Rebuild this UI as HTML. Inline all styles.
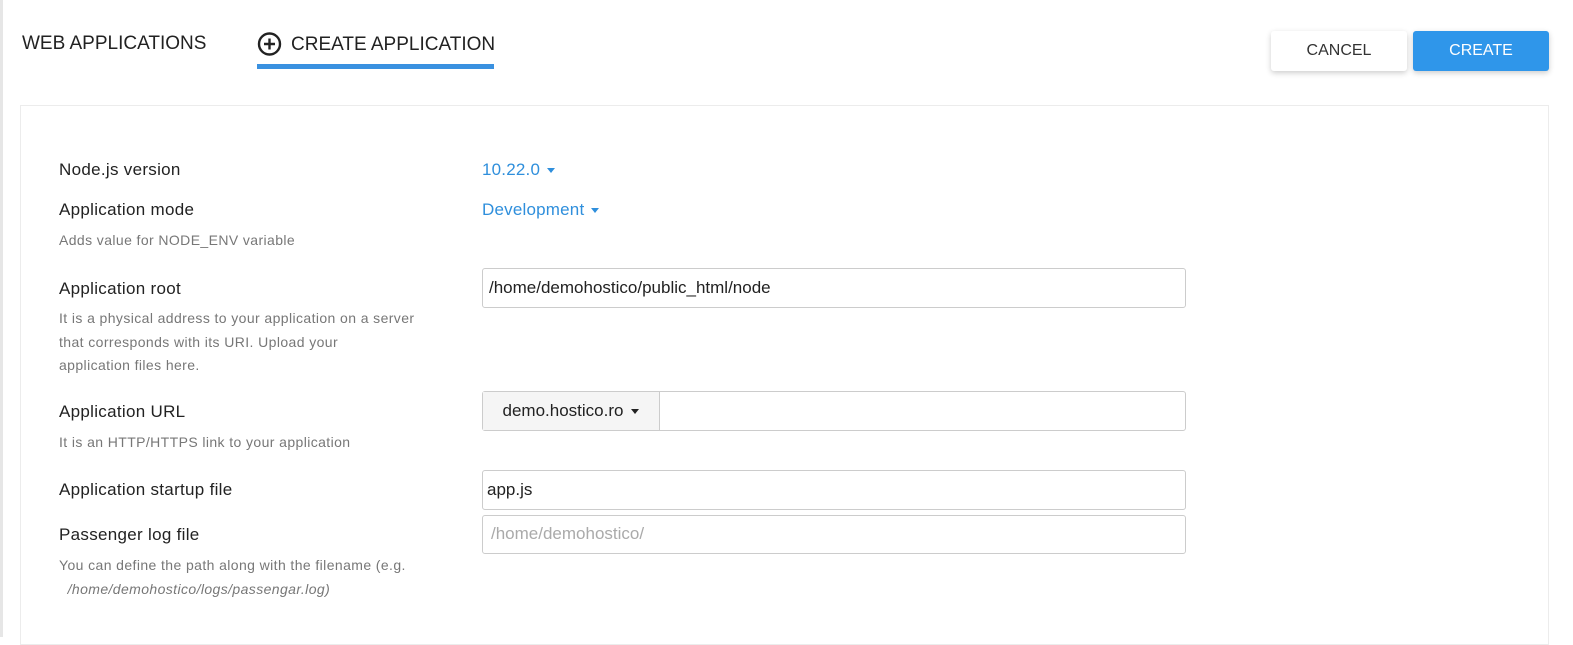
<!DOCTYPE html>
<html><head><meta charset="utf-8"><style>
body{margin:0;width:1573px;height:637px;background:#fff;font-family:"Liberation Sans",sans-serif;position:relative;overflow:hidden;color:#222}
.a{position:absolute;white-space:nowrap}
.lbl{font-size:17px;color:#222;letter-spacing:0.3px}
.hint{font-size:14px;color:#777;line-height:23.5px;letter-spacing:0.4px}
.blue{color:#2f8fdc;font-size:17px;letter-spacing:0.2px}
.caret{display:inline-block;width:0;height:0;border-left:4.5px solid transparent;border-right:4.5px solid transparent;border-top:5px solid currentColor;vertical-align:middle;margin-left:7px}
.inp{position:absolute;left:482px;width:704px;height:38px;border:1px solid #ccc;border-radius:3px;box-sizing:border-box;font-size:17px;line-height:36px;padding-left:6px}
</style></head><body>
<div class="a" style="left:0;top:0;width:3px;height:637px;background:#e6e6e6"></div>
<div class="a" style="left:22px;top:33px;font-size:19px;color:#222">WEB APPLICATIONS</div>
<svg class="a" style="left:257px;top:31px" width="26" height="26" viewBox="0 0 26 26"><circle cx="12.5" cy="13" r="10.5" fill="none" stroke="#222" stroke-width="2.4"/><path d="M12.5 7.5v11M7 13h11" stroke="#222" stroke-width="2.4"/></svg>
<div class="a" style="left:291px;top:34px;font-size:19px;color:#222">CREATE APPLICATION</div>
<div class="a" style="left:257px;top:64px;width:237px;height:5px;background:#3a91e0"></div>
<div class="a" style="left:1271px;top:31px;width:136px;height:40px;background:#fff;border-radius:3px;box-shadow:0 2px 6px rgba(0,0,0,.2);font-size:16px;text-align:center;line-height:40px;color:#333">CANCEL</div>
<div class="a" style="left:1413px;top:31px;width:136px;height:40px;background:#2f96ea;border-radius:3px;box-shadow:0 2px 6px rgba(0,0,0,.2);font-size:16px;text-align:center;line-height:40px;color:#fff">CREATE</div>
<div class="a" style="left:20px;top:105px;width:1529px;height:540px;border:1px solid #ececec;box-sizing:border-box"></div>
<div class="a lbl" style="left:59px;top:160px">Node.js version</div>
<div class="a blue" style="left:482px;top:160px">10.22.0<span class="caret"></span></div>
<div class="a lbl" style="left:59px;top:200px">Application mode</div>
<div class="a blue" style="left:482px;top:200px">Development<span class="caret"></span></div>
<div class="a hint" style="left:59px;top:229px">Adds value for NODE_ENV variable</div>
<div class="a lbl" style="left:59px;top:279px">Application root</div>
<div class="a hint" style="left:59px;top:307px">It is a physical address to your application on a server<br>that corresponds with its URI. Upload your<br>application files here.</div>
<div class="inp" style="top:268px;height:40px;line-height:38px">/home/demohostico/public_html/node</div>
<div class="a lbl" style="left:59px;top:402px">Application URL</div>
<div class="a hint" style="left:59px;top:431px">It is an HTTP/HTTPS link to your application</div>
<div class="inp" style="top:391px;height:40px;padding:0"><div style="position:absolute;left:0;top:0;width:176px;height:38px;background:#f5f5f5;border-right:1px solid #ccc;text-align:center;line-height:38px;font-size:17px">demo.hostico.ro<span class="caret" style="margin-left:8px"></span></div></div>
<div class="a lbl" style="left:59px;top:480px">Application startup file</div>
<div class="inp" style="top:470px;height:40px;line-height:38px;padding-left:4px">app.js</div>
<div class="a lbl" style="left:59px;top:525px">Passenger log file</div>
<div class="inp" style="top:515px;height:39px;color:#aaa;padding-left:8px">/home/demohostico/</div>
<div class="a hint" style="left:59px;top:554px">You can define the path along with the filename (e.g.<br>&nbsp; <i>/home/demohostico/logs/passengar.log)</i></div>
</body></html>
